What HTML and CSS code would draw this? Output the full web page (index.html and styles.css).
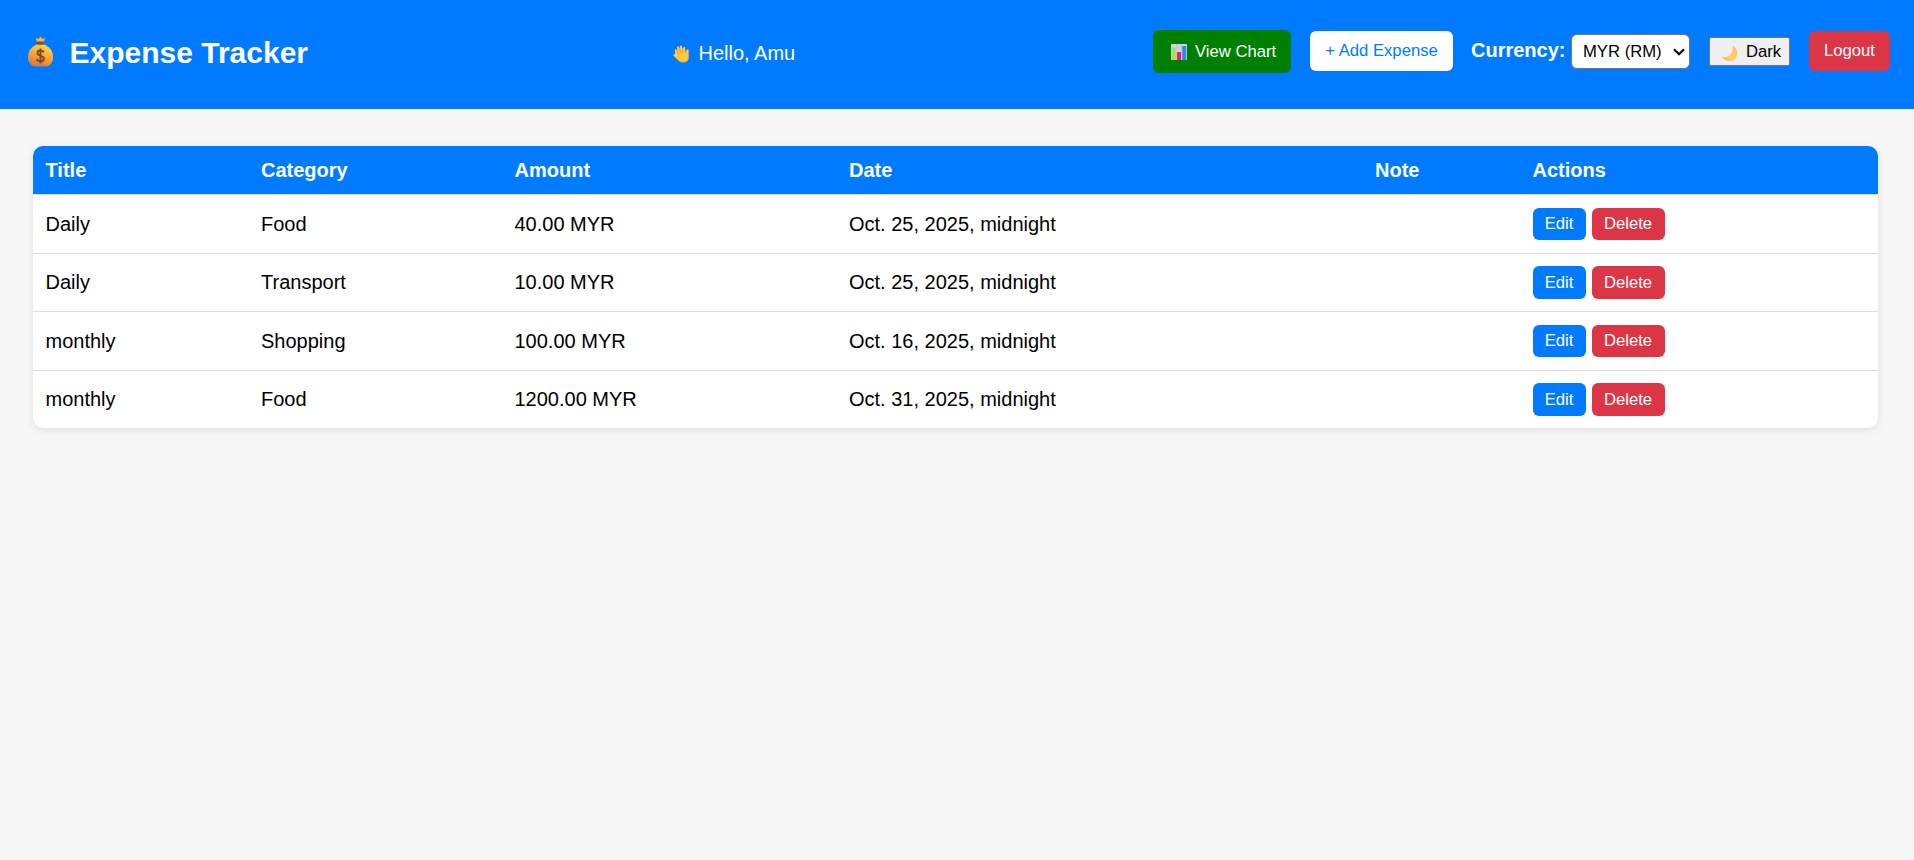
FILE: index.html
```html
<!DOCTYPE html>
<html lang="en">
<head>
<meta charset="utf-8">
<title>Expense Tracker</title>
<link rel="stylesheet" href="styles.css">
</head>
<body>
<header class="header">
  <h1 class="brand">
    <svg class="bag" viewBox="0 0 26 31" aria-hidden="true">
      <defs>
        <linearGradient id="gold" x1="0.65" y1="0" x2="0.3" y2="1">
          <stop offset="0" stop-color="#ffd43c"/><stop offset="0.5" stop-color="#f6a83a"/><stop offset="1" stop-color="#d9703f"/>
        </linearGradient>
      </defs>
      <path d="M9.5 6 8.3 2.2 11.2 2.7 13 .5 14.8 2.7 17.7 2.2 16.3 6z" fill="#fbb23c"/>
      <path d="M9.6 8.300C4 10.500.5 15.500.5 21c0 6 3 9 7 9.500h11c4-.5 7-3.500 7-9.500 0-5.500-3.500-10.500-9.100-12.700z" fill="url(#gold)"/>
      <rect x="9.500" y="5.500" width="7" height="3.200" rx=".8" fill="#8a4b35"/>
      <path d="M16.200 16.500c-.5-1.500-1.800-2-3.300-2-1.800 0-3 .9-3 2.500 0 3.600 6.500 2 6.500 5.600 0 1.700-1.400 2.700-3.300 2.700-1.900 0-3.300-.8-3.600-2.500M13 12.500v15" fill="none" stroke="#7d4833" stroke-width="1.900"/>
    </svg>
    <span>Expense Tracker</span>
  </h1>
  <p class="greeting">
    <svg class="wave" viewBox="0 0 20 21" aria-hidden="true">
      <path d="M4.300 11.800 4.100 7.700c-.1-1.200 1.300-1.500 1.800-.5l.7 1.200-.3-3.800c0-1.300 1.500-1.500 2-.4l.8 2 .3-2.700c.3-1.200 1.700-1.200 2 0l.6 2.800 1-1.600c.6-1 2-.6 1.900.5l.3 4.800 1.400-2.800c.5-1.100 2-.9 2 .4v7.700c0 3-2 5-5.300 5-2.800 0-4.600-1-6.300-2.800L2.900 13.600c-1-1.100.2-2.500 1.400-1.800z" fill="#ffc83d"/>
      <path d="m6.300 8.300 2.500 4M8.700 6l2 5M11.500 6.200l1 4.300M18.300 15.500c-.2 3-2 4.600-5 4.600-2.500 0-4.100-.7-5.800-2.300" fill="none" stroke="#e39a35" stroke-width=".9"/>
      <path d="M11.500.8c1.800 0 3 .8 3.700 2M.8 13c.2 1.500 1 2.500 2.400 3.400" fill="none" stroke="#2467b5" stroke-width="1"/>
    </svg>
    <span>Hello, Amu</span>
  </p>
  <nav class="actions">
    <button class="btn chart">
      <svg class="bars" viewBox="0 0 16 16" aria-hidden="true">
        <rect width="16" height="16" rx=".6" fill="#d9cfe2"/>
        <path d="M5.500 0v16M10.500 0v16M0 4h16" stroke="#c3b6d0" stroke-width=".6"/>
        <rect x=".8" y="4" width="3.900" height="12" fill="#9be35c"/>
        <rect x="6" y="8" width="4" height="8" fill="#e0265f"/>
        <rect x="11.200" y="2" width="4" height="14" fill="#2f88e0"/>
      </svg>
      <span>View Chart</span>
    </button>
    <button class="btn add">+ Add Expense</button>
    <label class="currency">
      <span class="currency-label">Currency:</span>
      <span class="select-box">
        <select class="select"><option>MYR (RM)</option></select>
        <svg class="chevron" viewBox="0 0 12 8" aria-hidden="true"><path d="m1 1.300 5 5 5-5" fill="none" stroke="#111" stroke-width="2.200"/></svg>
      </span>
    </label>
    <button class="dark">
      <svg class="moon" viewBox="0 0 17 17" aria-hidden="true">
        <defs><linearGradient id="glow" x1="1" y1="0" x2="0" y2="1"><stop offset="0" stop-color="#f3bd72"/><stop offset=".6" stop-color="#ffd15e"/><stop offset="1" stop-color="#efac74"/></linearGradient></defs>
        <path d="M11.600.8c4.800 2.500 6 8 3.400 12-3 4.300-10.500 4.700-14.200-.8 3.400 1 7-.1 9-2.900 1.700-2.500 2.300-5.200 1.800-8.300z" fill="url(#glow)"/>
      </svg>
      <span>Dark</span>
    </button>
    <button class="btn logout">Logout</button>
  </nav>
</header>
<main class="content">
  <div class="card">
  <table class="table">
    <colgroup><col class="c-title"><col class="c-category"><col class="c-amount"><col class="c-date"><col class="c-note"><col></colgroup>
    <thead>
      <tr><th>Title</th><th>Category</th><th>Amount</th><th>Date</th><th>Note</th><th>Actions</th></tr>
    </thead>
    <tbody>
      <tr><td>Daily</td><td>Food</td><td>40.00 MYR</td><td>Oct. 25, 2025, midnight</td><td></td><td><div class="row-actions"><button class="small edit">Edit</button><button class="small delete">Delete</button></div></td></tr>
      <tr><td>Daily</td><td>Transport</td><td>10.00 MYR</td><td>Oct. 25, 2025, midnight</td><td></td><td><div class="row-actions"><button class="small edit">Edit</button><button class="small delete">Delete</button></div></td></tr>
      <tr><td>monthly</td><td>Shopping</td><td>100.00 MYR</td><td>Oct. 16, 2025, midnight</td><td></td><td><div class="row-actions"><button class="small edit">Edit</button><button class="small delete">Delete</button></div></td></tr>
      <tr><td>monthly</td><td>Food</td><td>1200.00 MYR</td><td>Oct. 31, 2025, midnight</td><td></td><td><div class="row-actions"><button class="small edit">Edit</button><button class="small delete">Delete</button></div></td></tr>
    </tbody>
  </table>
  </div>
</main>
</body>
</html>
```
FILE: styles.css
```css
* { box-sizing: border-box; }

body {
  min-height: 100vh;
  margin: 0;
  background: #f7f7f7;
  color: #000;
  font-family: "Liberation Sans", Arial, sans-serif;
  font-size: 20px;
}

button, select { font-family: inherit; font-size: 16.667px; }

.header {
  display: flex;
  align-items: flex-start;
  height: 109px;
  padding: 0 24px 0 27px;
  background: #007bff;
  color: #fff;
}

.brand {
  display: flex;
  align-items: flex-start;
  width: 645px;
  margin: 0;
  padding-top: 36px;
  font-size: 30px;
  line-height: 34px;
}
.bag { width: 27px; height: 31px; margin: 0 15.500px 0 0; }

.greeting {
  display: flex;
  margin: 0;
  padding-top: 42px;
  line-height: 23px;
}
.wave { width: 19px; height: 20px; margin: 1px 8.500px 0 -1px; }

.actions { display: flex; align-items: flex-start; margin-left: auto; }

.btn {
  height: 40px;
  margin-top: 31px;
  padding: 0 15px;
  border: 0;
  border-radius: 6px;
  color: #fff;
}
.chart {
  display: flex;
  align-items: center;
  width: 138px;
  height: 43px;
  margin: 30px 19px 0 0;
  padding: 1px 0 0 18px;
  background: #008000;
}
.bars { width: 16px; height: 16px; margin-right: 8px; }
.add { width: 143px; margin-right: 18px; background: #fff; color: #007bff; }

.currency { display: flex; align-items: flex-start; margin-right: 19px; font-weight: bold; }
.currency-label { width: 100px; padding-top: 39px; line-height: 23px; }
.select-box { position: relative; margin-top: 34px; }
.select {
  display: block;
  width: 119px;
  height: 35px;
  padding: 0 0 0 11px;
  border: 1px solid #767676;
  border-radius: 6px;
  background: #fff;
  color: #000;
  appearance: none;
}
.chevron { position: absolute; right: 5px; top: 14px; width: 12px; height: 8px; }

.dark {
  display: flex;
  align-items: center;
  width: 81px;
  height: 29px;
  margin: 37px 19px 0 0;
  padding: 1px 0 0 11px;
  border: 1px solid #767676;
  border-radius: 2px;
  background: #efefef;
  color: #000;
}
.moon { width: 17px; height: 17px; margin: 2px 8px 0 0; }
.logout { width: 81px; background: #dc3545; }

.content { padding: 37px 36px 40px 33px; }

.card {
  overflow: hidden;
  border-radius: 10px;
  background: #fff;
  box-shadow: 0 2px 8px rgba(0, 0, 0, 0.1);
}
.table {
  width: 100%;
  border-spacing: 0;
  table-layout: fixed;
}
.c-title { width: 215.5px; }
.c-category { width: 253.5px; }
.c-amount { width: 334.5px; }
.c-date { width: 526px; }
.c-note { width: 157.5px; }

.table th, .table td {
  padding: 0 12.5px;
  border-bottom: 1px solid #ddd;
  text-align: left;
}
.table th { height: 49px; background: #007bff; color: #fff; }
.table td { height: 59px; }
.table tbody tr:nth-child(2) td { height: 58px; }
.table tbody tr:last-child td { height: 57px; border-bottom: 0; }

.row-actions { display: flex; gap: 6px; }
.small {
  height: 32px;
  padding: 0;
  border: 0;
  border-radius: 6px;
  color: #fff;
}
.table tr:nth-child(even) .small { height: 33px; }
.edit { width: 53px; background: #007bff; }
.delete { width: 73px; background: #dc3545; }
```
